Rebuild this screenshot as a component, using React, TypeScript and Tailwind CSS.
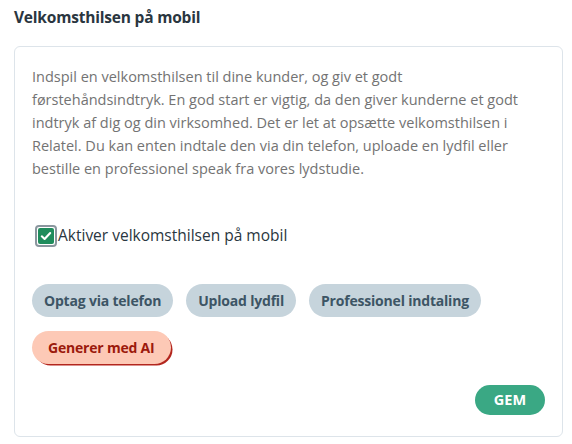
export default function App() {
  const options = ["Optag via telefon", "Upload lydfil", "Professionel indtaling"];

  return (
    <div
      className="w-[572px] h-[444px] bg-white pl-[14px] pt-[6px] text-[#2a3640]"
      style={{ fontFamily: '"Open Sans", "Noto Sans", sans-serif' }}
    >
      <h2 className="text-[15.5px] font-bold leading-[22px] tracking-[-0.2px]">Velkomsthilsen på mobil</h2>

      <div className="mt-[18px] h-[391px] w-[549px] rounded-[6px] border border-[#dde4ea] px-[17px] pt-[18px]">
        <p className="max-w-[500px] text-[14.5px] leading-[23px] text-[#737373]">
          Indspil en velkomsthilsen til dine kunder, og giv et godt førstehåndsindtryk. En god start er
          vigtig, da den giver kunderne et godt indtryk af dig og din virksomhed. Det er let at opsætte
          velkomsthilsen i Relatel. Du kan enten indtale den via din telefon, uploade en lydfil eller
          bestille en professionel speak fra vores lydstudie.
        </p>

        <label className="ml-[3px] mt-[44px] flex items-center gap-[1px]">
          <span className="flex h-[22px] w-[22px] items-center justify-center rounded-[4px] border-2 border-[#8a969e] bg-white p-[1px]">
            <span className="flex h-full w-full items-center justify-center rounded-[2px] bg-[#1f8c5c]">
              <svg viewBox="0 0 16 16" className="h-[14px] w-[14px]" fill="none">
                <path d="M3.2 8.4 6.4 11.4 12.8 4.6" stroke="white" strokeWidth="2.4" strokeLinecap="round" strokeLinejoin="round" />
              </svg>
            </span>
          </span>
          <span className="text-[15.5px] text-[#2a3640]">Aktiver velkomsthilsen på mobil</span>
        </label>

        <div className="mt-[37px] flex flex-wrap gap-x-[13px] gap-y-[14px]">
          {options.map((o) => (
            <button
              key={o}
              className="h-[33px] rounded-full bg-[#c6d4dc] px-[12px] text-[14px] font-bold tracking-[-0.2px] text-[#3d5565]"
            >
              {o}
            </button>
          ))}
          <button className="h-[33px] rounded-full bg-[#fdc9b6] px-[16px] text-[14px] font-bold tracking-[-0.2px] text-[#9c1a0c] shadow-[2px_2px_0_-0.5px_#b3261e]">
            Generer med AI
          </button>
        </div>

        <div className="mt-[21px] flex justify-end">
          <button className="h-[30px] w-[70px] rounded-full bg-[#3aa884] text-[14.5px] font-bold text-white">
            GEM
          </button>
        </div>
      </div>
    </div>
  );
}
